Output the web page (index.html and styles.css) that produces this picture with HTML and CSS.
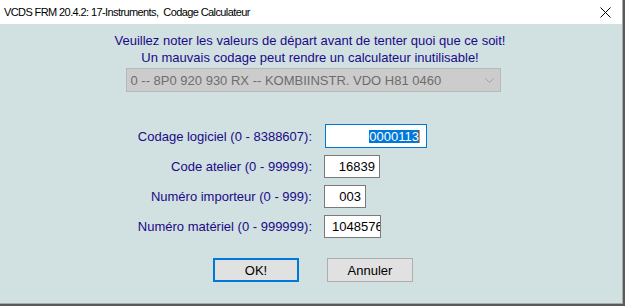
FILE: index.html
```html
<!DOCTYPE html>
<html lang="fr">
<head>
<meta charset="utf-8">
<link rel="stylesheet" href="styles.css">
</head>
<body>
<div class="window">
  <div class="titlebar">
    <span class="title">VCDS FRM 20.4.2: 17-Instruments,&nbsp; Codage Calculateur</span>
    <svg class="close" width="11" height="11" viewBox="0 0 11 11"><path d="M0.5 0.5 L10.5 10.5 M10.5 0.5 L0.5 10.5" stroke="#000" stroke-width="1" fill="none"/></svg>
  </div>
  <div class="content">
    <p class="warn">Veuillez noter les valeurs de départ avant de tenter quoi que ce soit!</p>
    <p class="warn">Un mauvais codage peut rendre un calculateur inutilisable!</p>
    <div class="select">
      <span>0 -- 8P0 920 930 RX -- KOMBIINSTR. VDO H81 0460</span>
      <svg class="chev" width="9" height="5" viewBox="0 0 9 5"><path d="M0.5 0.5 L4.5 4.5 L8.5 0.5" stroke="#a0a0a0" stroke-width="1" fill="none"/></svg>
    </div>
    <div class="form">
      <div class="row">
        <label class="lbl">Codage logiciel (0 - 8388607):</label>
        <div class="field focus w1"><span class="sel">0000113</span><span class="caret"></span></div>
      </div>
      <div class="row">
        <label class="lbl">Code atelier (0 - 99999):</label>
        <div class="field w2">16839</div>
      </div>
      <div class="row">
        <label class="lbl">Numéro importeur (0 - 999):</label>
        <div class="field w3">003</div>
      </div>
      <div class="row">
        <label class="lbl">Numéro matériel (0 - 999999):</label>
        <div class="field w4 left">1048576</div>
      </div>
    </div>
    <div class="buttons">
      <div class="btn default">OK!</div>
      <div class="btn">Annuler</div>
    </div>
  </div>
</div>
</body>
</html>
```
FILE: styles.css
```css
* { box-sizing: border-box; }
html, body { margin: 0; padding: 0; }
body {
  width: 625px;
  height: 306px;
  background: #5a5a5a;
  font-family: "Liberation Sans", Arial, sans-serif;
  overflow: hidden;
}
.window {
  width: 623px;
  height: 304px;
  background: #d1e0e0;
  border-right: 1px solid #a8a8a8;
  border-bottom: 1px solid #a8a8a8;
  display: flex;
  flex-direction: column;
}
.titlebar {
  height: 24px;
  background: #fff;
  display: flex;
  align-items: center;
  justify-content: space-between;
  padding-left: 4px;
  padding-right: 11px;
  flex: none;
}
.title {
  font-family: "Liberation Sans", Arial, sans-serif;
  font-size: 11px;
  letter-spacing: -0.6px;
  color: #000;
}
.content {
  display: flex;
  flex-direction: column;
  align-items: center;
  padding-top: 8px;
  padding-right: 2px;
}
.warn {
  margin: 0;
  font-size: 13px;
  line-height: 17px;
  color: #1a0a88;
}
.select {
  margin-top: 2px;
  width: 375px;
  height: 24px;
  margin-left: 6px;
  background: #cccccc;
  border: 1px solid #b8b8b8;
  display: flex;
  align-items: center;
  justify-content: space-between;
  padding: 0 6px 0 4px;
  color: #6d6d6d;
  font-size: 13px;
}
.form {
  margin-top: 32px;
  display: flex;
  flex-direction: column;
  gap: 7px;
  align-self: flex-start;
  margin-left: 100px;
}
.row {
  display: flex;
  align-items: center;
  gap: 12px;
}
.lbl {
  width: 212px;
  text-align: right;
  font-size: 13px;
  color: #1a0a88;
}
.field {
  height: 23px;
  background: #fff;
  border: 1px solid #7a7a7a;
  font-size: 13px;
  color: #000;
  display: flex;
  align-items: center;
  justify-content: flex-end;
  padding: 0 4px;
  overflow: hidden;
  white-space: nowrap;
}
.field.left { justify-content: flex-start; padding-left: 7px; padding-right: 0; }
.field.focus { border-color: #0078d7; height: 24px; margin-left: 1px; padding-right: 6px; }
.w1 { width: 102px; }
.w2 { width: 56px; }
.w3 { width: 42px; }
.w4 { width: 57px; }
.sel {
  background: #0078d7;
  color: #fff;
  line-height: 13px;
  padding: 0;
}
.caret {
  width: 1px;
  height: 13px;
  background: #ff8728;
}
.buttons {
  margin-top: 20px;
  display: flex;
  gap: 28px;
  margin-left: 6px;
}
.btn {
  width: 86px;
  height: 24px;
  background: #e1e1e1;
  border: 1px solid #adadad;
  display: flex;
  align-items: center;
  justify-content: center;
  font-size: 13px;
  color: #000;
}
.btn.default { border: 2px solid #0078d7; }
```
